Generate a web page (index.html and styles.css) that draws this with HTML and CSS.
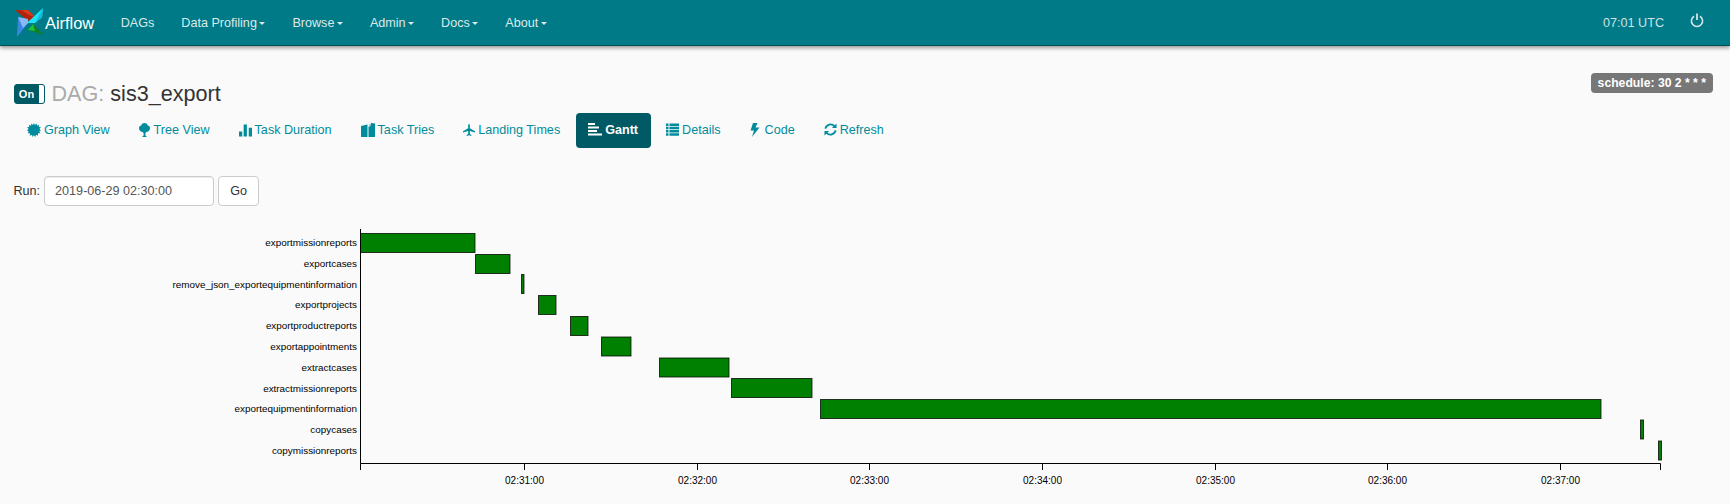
FILE: index.html
```html
<!DOCTYPE html>
<html lang="en">
<head>
    <title>Airflow - sis3_export</title>
    <link rel="stylesheet" href="styles.css">
</head>
<body>
    <div class="navbar">
        <a class="brand" href="#">
            <svg class="logo" width="30" height="30" viewBox="0 0 30 30">
                <polygon points="0,2 13,2 20,9 13,13" fill="#b3220c"/>
                <polygon points="6,2 13,2 20,9 14,7" fill="#dc3a1c"/>
                <polygon points="28,0 27,9 20,15 12,15" fill="#1be4f7"/>
                <polygon points="28,0 27,9 20,15" fill="#11bddb"/>
                <polygon points="29,27 13,22 18,16" fill="#0f7f25"/>
                <polygon points="18,16 13,22 20,23" fill="#1bc23c"/>
                <polygon points="3,9 13,15 2,29" fill="#3b86e0"/>
                <polygon points="3,9 13,11 13,15 8,20" fill="#8ab8f6"/>
            </svg>
            <span>Airflow</span>
        </a>
        <ul class="nav-links">
            <li>DAGs</li>
            <li class="dropdown">Data Profiling</li>
            <li class="dropdown">Browse</li>
            <li class="dropdown">Admin</li>
            <li class="dropdown">Docs</li>
            <li class="dropdown">About</li>
        </ul>
        <div class="nav-right">
            <span class="clock">07:01 UTC</span>
            <svg class="power" width="14" height="15" viewBox="0 0 14 15">
                <path d="M4 3.2A5.6 5.6 0 1 0 10 3.2" fill="none" stroke="#d4e4e6" stroke-width="1.6"/>
                <path d="M7 .5V7" fill="none" stroke="#d4e4e6" stroke-width="1.8"/>
            </svg>
        </div>
    </div>

    <div class="container">
        <div class="title-row">
            <h4 class="dag-title">
                <span class="toggle"><span class="toggle-on">On</span><span class="toggle-handle"></span></span>
                <span class="muted">DAG:</span>
                <span class="dag-name">sis3_export</span>
            </h4>
            <span class="schedule">schedule: 30 2 * * *</span>
        </div>

        <ul class="tabs">
            <li>
                <svg class="icon" width="14" height="14" viewBox="0 0 14 14"><polygon fill="currentColor" points="7,0 8,2 9.700,.4 10,2.700 12.200,1.800 11.700,4 14,4.300 12.400,6 14,7.500 12.300,8.300 13.300,10.300 11,10.300 11,12.700 9,11.700 8.300,14 7,12.300 5.500,14 5,11.700 2.800,12.700 3,10.300 .7,10.300 1.700,8.300 0,7.500 1.600,6 0,4.300 2.300,4 1.800,1.800 4,2.700 4.300,.4 6,2"/></svg>
                Graph View
            </li>
            <li>
                <svg class="icon tree-icon" width="11" height="14" viewBox="1.500 0 11 14"><path fill="currentColor" d="M7 0C8.500 0 9.800 .9 10.100 2.200 11.600 2.500 12.500 3.700 12.500 5.200 12.500 7.300 10.700 9 8.400 9.200L7.900 10.500V12.500L9.500 14H4.500L6.100 12.500V10.500L5.600 9.200C3.300 9 1.500 7.300 1.500 5.200 1.500 3.700 2.400 2.500 3.900 2.200 4.200 .9 5.500 0 7 0Z"/></svg>
                Tree View
            </li>
            <li>
                <svg class="icon" width="13" height="14" viewBox="0 0 14 14"><path fill="currentColor" d="M0 8.500H3.500V14H0ZM5 1H8.500V14H5ZM10.500 4.500H14V14H10.500Z"/></svg>
                Task Duration
            </li>
            <li>
                <svg class="icon" width="14" height="14" viewBox="0 0 14 14"><path fill="currentColor" d="M0 3L6.500 1.500V14H0ZM7.500 3.500H9L10 2V0L14 .5V14H7.500ZM8 2.500L9.500 .5V2.500Z"/></svg>
                Task Tries
            </li>
            <li>
                <svg class="icon" width="12" height="14" viewBox="0 0 14 14"><path fill="currentColor" d="M7 0C7.700 0 8 1 8 2V5L14 8.500V10L8 8.200V11.500L9.800 13V14L7 13.200 4.200 14V13L6 11.500V8.200L0 10V8.500L6 5V2C6 1 6.300 0 7 0Z"/></svg>
                Landing Times
            </li>
            <li class="active">
                <svg class="icon" width="14" height="13" viewBox="0 0 14 13"><path fill="currentColor" d="M0 0H7V2H0ZM0 3.500H11V5.500H0ZM0 7H9V9H0ZM0 10.500H14V12.500H0Z"/></svg>
                Gantt
            </li>
            <li>
                <svg class="icon" width="13" height="13" viewBox="0 0 14 14"><path fill="currentColor" d="M0 .5H2.700V3.200H0ZM3.700 .5H14V3.200H3.700ZM0 4H2.700V6.700H0ZM3.700 4H14V6.700H3.700ZM0 7.500H2.700V10.200H0ZM3.700 7.500H14V10.200H3.700ZM0 11H2.700V13.700H0ZM3.700 11H14V13.700H3.700Z"/></svg>
                Details
            </li>
            <li>
                <svg class="icon code-icon" width="10" height="14" viewBox="2 0 10 14"><polygon fill="currentColor" points="9.500,0 5,0 2.500,7.500 6,7.500 4,14 11.500,4.500 7.500,4.500"/></svg>
                Code
            </li>
            <li>
                <svg class="icon" width="13" height="13" viewBox="0 0 14 14"><path fill="none" stroke="currentColor" stroke-width="2" d="M1.500 6A5.600 5.600 0 0 1 11.300 3.500M12.500 8A5.600 5.600 0 0 1 2.700 10.500"/><path fill="currentColor" d="M13.500 .5V5.500H8.500ZM.5 13.500V8.500H5.500Z"/></svg>
                Refresh
            </li>
        </ul>

        <form class="run-form">
            <label for="execution_date">Run:</label>
            <input type="text" id="execution_date" value="2019-06-29 02:30:00">
            <button type="button">Go</button>
        </form>

        <svg class="gantt" width="1730" height="280" viewBox="0 224 1730 280">
            <g class="bars">
                <rect x="360.500" y="233.500" width="114.500" height="19"/>
                <rect x="475.500" y="254.500" width="34.500" height="19"/>
                <rect x="521.500" y="274.500" width="2.500" height="19"/>
                <rect x="538.500" y="295.500" width="17.500" height="19"/>
                <rect x="570.500" y="316.500" width="17.500" height="19"/>
                <rect x="601.500" y="337" width="29.500" height="19"/>
                <rect x="659.500" y="358" width="69.500" height="19"/>
                <rect x="731.500" y="378.500" width="80.500" height="19"/>
                <rect x="820.500" y="399.500" width="780.500" height="19"/>
                <rect x="1640.500" y="420" width="3" height="19"/>
                <rect x="1658.500" y="441" width="3" height="19"/>
            </g>
            <g class="task-labels">
                <text x="357" y="246">exportmissionreports</text>
                <text x="357" y="267">exportcases</text>
                <text x="357" y="288">remove_json_exportequipmentinformation</text>
                <text x="357" y="308">exportprojects</text>
                <text x="357" y="329">exportproductreports</text>
                <text x="357" y="350">exportappointments</text>
                <text x="357" y="371">extractcases</text>
                <text x="357" y="392">extractmissionreports</text>
                <text x="357" y="412">exportequipmentinformation</text>
                <text x="357" y="433">copycases</text>
                <text x="357" y="454">copymissionreports</text>
            </g>
            <path class="axis" d="M360.500 229V463.500H1660.500V470M360.500 463.500V470M524.500 463.500V470M697.500 463.500V470M869.500 463.500V470M1042.500 463.500V470M1215.500 463.500V470M1387.500 463.500V470M1560.500 463.500V470"/>
            <g class="tick-labels">
                <text x="524.500" y="484">02:31:00</text>
                <text x="697.500" y="484">02:32:00</text>
                <text x="869.500" y="484">02:33:00</text>
                <text x="1042.500" y="484">02:34:00</text>
                <text x="1215.500" y="484">02:35:00</text>
                <text x="1387.500" y="484">02:36:00</text>
                <text x="1560.500" y="484">02:37:00</text>
            </g>
        </svg>
    </div>
</body>
</html>
```

FILE: styles.css
```css
body {
    font-family: "Liberation Sans", Arial, sans-serif;
    font-size: 12.6px;
    line-height: 18px;
    margin: 0;
    padding: 0;
    background-color: #fafafa;
    color: #333;
    overflow: hidden;
}
ul {
    list-style: none;
    margin: 0;
    padding: 0;
}
.navbar {
    display: flex;
    align-items: center;
    height: 45px;
    padding: 0 26px 0 13px;
    background-color: #007a87;
    border-bottom: 1px solid #004d55;
    box-shadow: 0 2px 4px rgba(0, 0, 0, 0.4);
}
.brand {
    display: flex;
    align-items: center;
    color: #fff;
    font-size: 16.4px;
    text-decoration: none;
}
.logo {
    flex: none;
    margin: 1px 0 0 2px;
}
.nav-links {
    display: flex;
    color: #dce9ea;
    gap: 27px;
    margin-left: 26.5px;
}
.dropdown::after {
    content: "";
    display: inline-block;
    margin-left: 2.5px;
    vertical-align: middle;
    border-top: 3.6px solid #dce9ea;
    border-left: 3.3px solid transparent;
    border-right: 3.3px solid transparent;
}
.nav-right {
    display: flex;
    align-items: center;
    margin-left: auto;
    color: #cfe2e4;
    gap: 26px;
}
.power {
    margin-top: -5px;
}
.container {
    padding: 0 13.5px;
}
.title-row {
    display: flex;
    justify-content: space-between;
    align-items: flex-start;
    padding-top: 27px;
}
.dag-title {
    display: flex;
    align-items: center;
    gap: 7px;
    margin: 6px 0 0;
    font-size: 21.6px;
    font-weight: 400;
    line-height: 30px;
    color: #333;
}
.muted {
    color: #aaa;
}
.dag-name {
    margin-left: -1px;
}
.toggle {
    display: flex;
    width: 31px;
    height: 20px;
    box-sizing: border-box;
    background-color: #005a66;
    border-radius: 3px;
    border: 1px solid #005a66;
}
.toggle-on {
    flex: 1;
    color: #fff;
    font-size: 11px;
    font-weight: 700;
    line-height: 18px;
    text-align: center;
}
.toggle-handle {
    width: 5px;
    background-color: #fff;
    border-radius: 0 2px 2px 0;
}
.schedule {
    background-color: #777;
    color: #fff;
    font-size: 12.2px;
    font-weight: 700;
    line-height: 12px;
    padding: 4px 7px;
    border-radius: 4px;
    margin-right: 3.5px;
}
.tabs {
    display: flex;
    gap: 2px;
    color: #008c9c;
    margin-top: 4px;
}
.tabs li {
    display: flex;
    align-items: center;
    gap: 3px;
    height: 35px;
    box-sizing: border-box;
    padding: 0 13.5px 2px;
    white-space: nowrap;
    border-radius: 4px;
}
.tabs .active {
    background-color: #005a66;
    color: #fff;
    font-weight: 700;
    padding: 0 12.5px 2px;
}
.icon {
    flex: none;
}
.tree-icon {
    margin-right: 1px;
}
.code-icon {
    margin-right: 2px;
}
.run-form {
    display: flex;
    align-items: center;
    margin-top: 28px;
}
.run-form label {
    margin-right: 4px;
}
.run-form input {
    width: 170px;
    height: 30px;
    padding: 0 10px;
    box-sizing: border-box;
    border: 1px solid #ccc;
    border-radius: 4px;
    font: inherit;
    color: #555;
    background-color: #fff;
    box-shadow: inset 0 1px 1px rgba(0, 0, 0, 0.075);
}
.run-form button {
    width: 41px;
    height: 30px;
    margin-left: 4px;
    border: 1px solid #ccc;
    border-radius: 4px;
    background-color: #fff;
    font: inherit;
    color: #333;
}
.gantt {
    display: block;
    margin: 18px 0 0 -13.5px;
}
.bars rect {
    fill: #008000;
    stroke: #000;
    stroke-opacity: 0.75;
    stroke-width: 1;
}
.axis {
    fill: none;
    stroke: #000;
    stroke-width: 1;
}
.task-labels text {
    font-size: 9.9px;
    text-anchor: end;
    fill: #000;
}
.tick-labels text {
    font-size: 10px;
    text-anchor: middle;
    fill: #000;
}
```
